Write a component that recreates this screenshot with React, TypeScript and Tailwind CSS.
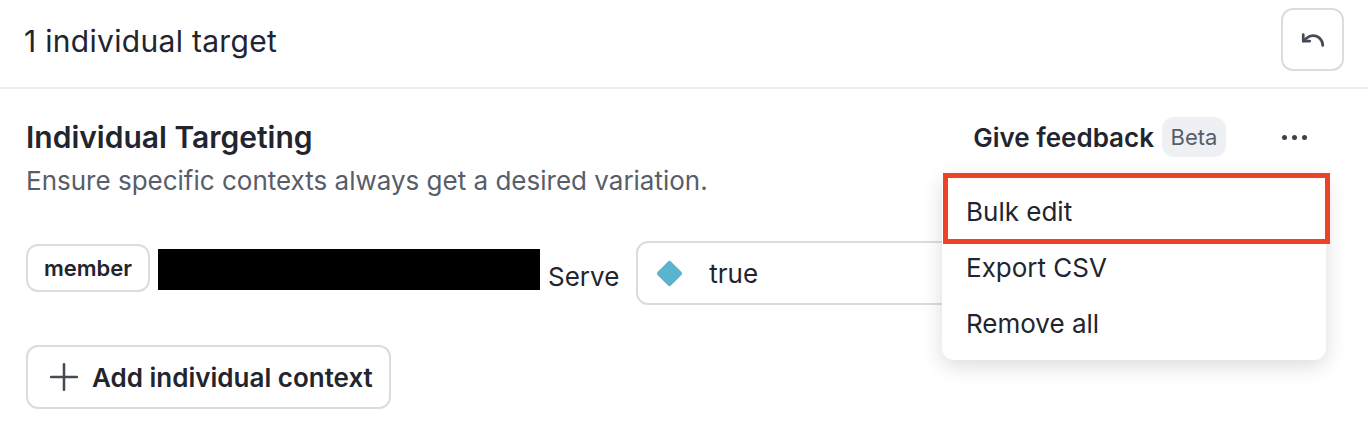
import React from 'react';
import { Plus, Undo } from 'lucide-react';

const menuItems = ['Bulk edit', 'Export CSV', 'Remove all'];

const App: React.FC = () => {
  return (
    <div className="relative h-[436px] w-full overflow-hidden bg-white font-['Inter',sans-serif] text-[#23252e]">
      <header className="flex h-[89px] items-start justify-between border-b-2 border-[#ecedf2] pl-6 pr-6 pt-2">
        <h1 className="text-[30px] font-normal leading-[66px] tracking-[0.3px]">1 individual target</h1>
        <button className="flex h-[63px] w-[63px] items-center justify-center rounded-xl border-2 border-[#d8dce3] text-[#454a55]" aria-label="Undo">
          <Undo size={26} strokeWidth={2.5} />
        </button>
      </header>

      <section className="px-[26px] pt-6">
        <div className="flex items-start justify-between">
          <div>
            <h2 className="text-[30px] font-semibold leading-[48px]">Individual Targeting</h2>
            <p className="text-[26px] leading-[40px] text-[#585d6a]">Ensure specific contexts always get a desired variation.</p>
          </div>
          <div className="flex h-[48px] items-center pr-[35px]">
            <span className="text-[26px] font-semibold">Give feedback</span>
            <span className="ml-2 flex h-10 w-16 items-center justify-center rounded-xl bg-[#eef0f4] text-[22px] text-[#585d6a]">Beta</span>
            <span className="ml-14 flex gap-[5px]">
              <i className="h-[5px] w-[5px] rounded-full bg-[#3c404a]" />
              <i className="h-[5px] w-[5px] rounded-full bg-[#3c404a]" />
              <i className="h-[5px] w-[5px] rounded-full bg-[#3c404a]" />
            </span>
          </div>
        </div>

        <div className="mt-10 flex items-start">
          <span className="mt-[3px] flex h-12 w-[124px] items-center justify-center rounded-xl border-2 border-[#d8dce3] text-[22px] font-semibold">member</span>
          <span className="ml-2 mt-2 h-[41px] w-[382px] bg-black" />
          <span className="ml-2 mt-5 text-[26px] leading-[32px]">Serve</span>
          <div className="ml-[17px] flex h-16 w-[500px] items-center rounded-xl border-2 border-[#d8dce3] pl-[22px] text-[26px]">
            <span className="h-[19px] w-[19px] rotate-45 rounded-[2px] bg-[#5ab4cf]" />
            <span className="ml-[30px]">true</span>
          </div>
        </div>

        <button className="mt-10 flex h-16 w-[365px] items-center rounded-xl border-2 border-[#d8dce3] pl-[14px] text-[26px] font-semibold">
          <Plus size={44} strokeWidth={1.4} className="text-[#454a55]" />
          <span className="ml-[6px]">Add individual context</span>
        </button>
      </section>

      {/* dropdown sits over the row */}
      <div className="absolute left-[942px] top-[173px] h-[187px] w-[384px] rounded-xl bg-white pb-[11px] pl-6 pt-[10px] text-[26px] shadow-[0_6px_20px_rgba(30,35,50,0.16)]">
        {menuItems.map((item) => (
          <div key={item} className="flex h-14 items-center">{item}</div>
        ))}
      </div>
      {/* red annotation box */}
      <div className="absolute left-[943px] top-[173px] h-[71px] w-[387px] border-[5px] border-[#ee4228]" />
    </div>
  );
};

export default App;
